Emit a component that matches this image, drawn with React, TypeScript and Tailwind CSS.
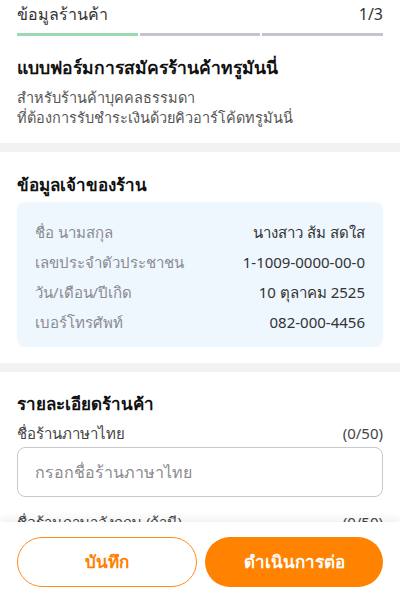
import React from "react";

const rows: [string, string][] = [
  ["ชื่อ นามสกุล", "นางสาว ส้ม สดใส"],
  ["เลขประจำตัวประชาชน", "1-1009-0000-00-0"],
  ["วัน/เดือน/ปีเกิด", "10 ตุลาคม 2525"],
  ["เบอร์โทรศัพท์", "082-000-4456"],
];

export default function App() {
  return (
    <div
      className="relative w-[400px] h-[600px] overflow-hidden bg-white text-[#222]"
      style={{ fontFamily: '"Noto Sans", "Open Sans", sans-serif' }}
    >
      <div className="px-[17px] pt-[2px] pb-[16px]">
        <div className="flex justify-between items-center h-[24px] text-[16px] text-[#333]">
          <span>ข้อมูลร้านค้า</span>
          <span>1/3</span>
        </div>
        <div className="mt-[7px] flex gap-[2px] h-[3px]">
          <div className="flex-1 bg-[#9ad9b4]" />
          <div className="flex-1 bg-[#c4c4cc]" />
          <div className="flex-1 bg-[#c4c4cc]" />
        </div>
        <h1 className="mt-[17px] text-[17.5px] font-bold leading-[28px] text-[#111]">
          แบบฟอร์มการสมัครร้านค้าทรูมันนี่
        </h1>
        <p className="mt-[6px] text-[14.5px] leading-[20px] text-[#555]">
          สำหรับร้านค้าบุคคลธรรมดา
          <br />
          ที่ต้องการรับชำระเงินด้วยคิวอาร์โค้ดทรูมันนี่
        </p>
      </div>
      <div className="h-[9px] bg-[#f2f2f4]" />
      <div className="px-[17px] pt-[19px] pb-[16px]">
        <h2 className="text-[17px] font-bold leading-[28px] text-[#111]">ข้อมูลเจ้าของร้าน</h2>
        <div className="mt-[3px] rounded-[8px] bg-[#eef6fe] px-[18px] pt-[15px] pb-[10px] flex flex-col">
          {rows.map(([k, v]) => (
            <div key={k} className="flex justify-between items-center h-[30px] text-[15px]">
              <span className="text-[#8a8a90]">{k}</span>
              <span className="text-[#333]">{v}</span>
            </div>
          ))}
        </div>
      </div>
      <div className="h-[9px] bg-[#f2f2f4]" />
      <div className="px-[17px] pt-[18px]">
        <h2 className="text-[17px] font-bold leading-[28px] text-[#111]">รายละเอียดร้านค้า</h2>
        <div className="mt-[2px] flex justify-between items-center text-[15px] text-[#444] h-[26px]">
          <span>ชื่อร้านภาษาไทย</span>
          <span>(0/50)</span>
        </div>
        <div className="mt-[1px] h-[50px] rounded-[8px] border border-[#c8c8ce] flex items-center px-[17px] text-[16px] text-[#8a8a90]">
          กรอกชื่อร้านภาษาไทย
        </div>
        <div className="mt-[12px] flex justify-between items-center text-[15px] text-[#444] h-[26px]">
          <span>ชื่อร้านภาษาอังกฤษ (ถ้ามี)</span>
          <span>(0/50)</span>
        </div>
      </div>
      <div className="absolute left-0 right-0 bottom-0 h-[78px] bg-white shadow-[0_-4px_8px_rgba(0,0,0,0.06)] flex gap-[8px] px-[17px] pt-[15px]">
        <button className="flex-1 h-[50px] rounded-full border-[1.5px] border-[#ff8a1f] text-[#ff7f00] text-[17px] font-bold">
          บันทึก
        </button>
        <button className="flex-1 h-[50px] rounded-full bg-[#ff8200] text-white text-[17px] font-bold">
          ดำเนินการต่อ
        </button>
      </div>
    </div>
  );
}
